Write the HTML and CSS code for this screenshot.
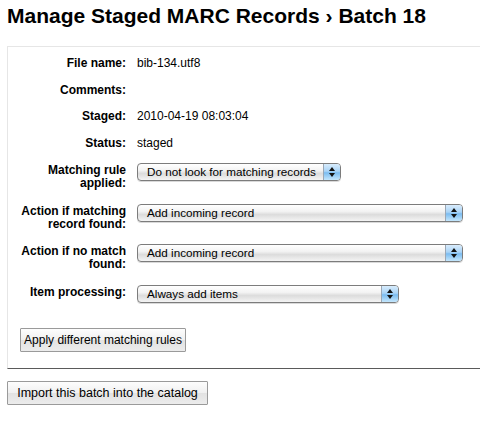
FILE: index.html
```
<!DOCTYPE html>
<html>
<head>
<meta charset="utf-8">
<link rel="stylesheet" href="styles.css">
</head>
<body>
<h1 class="title">Manage Staged MARC Records › Batch 18</h1>
<div class="box">
  <div class="rows">
    <div class="row"><div class="lbl">File name:</div><div class="val">bib-134.utf8</div></div>
    <div class="row"><div class="lbl">Comments:</div><div class="val"></div></div>
    <div class="row"><div class="lbl">Staged:</div><div class="val">2010-04-19 08:03:04</div></div>
    <div class="row"><div class="lbl">Status:</div><div class="val">staged</div></div>
    <div class="row sel-row"><div class="lbl">Matching rule applied:</div><div class="val"><div class="select w1"><span class="sel-text">Do not look for matching records</span><span class="arrows"><span class="up"></span><span class="dn"></span></span></div></div></div>
    <div class="row sel-row"><div class="lbl">Action if matching record found:</div><div class="val"><div class="select w2"><span class="sel-text">Add incoming record</span><span class="arrows"><span class="up"></span><span class="dn"></span></span></div></div></div>
    <div class="row sel-row"><div class="lbl">Action if no match found:</div><div class="val"><div class="select w2"><span class="sel-text">Add incoming record</span><span class="arrows"><span class="up"></span><span class="dn"></span></span></div></div></div>
    <div class="row sel-row"><div class="lbl">Item processing:</div><div class="val"><div class="select w3"><span class="sel-text">Always add items</span><span class="arrows"><span class="up"></span><span class="dn"></span></span></div></div></div>
  </div>
  <button class="btn btn-apply">Apply different matching rules</button>
</div>
<button class="btn btn-import">Import this batch into the catalog</button>
</body>
</html>
```
FILE: styles.css
```
html, body {
  margin: 0;
  padding: 0;
  background: #fff;
}
body {
  padding: 0 0 0 7px;
  font-family: "Liberation Sans", Arial, Helvetica, sans-serif;
  font-size: 12px;
  color: #000;
  overflow: hidden;
}
.title {
  margin: 0;
  padding-top: 4px;
  height: 46px;
  box-sizing: border-box;
  font-size: 21px;
  line-height: 24px;
  font-weight: bold;
}
.box {
  border-top: 1px solid #e6e6e6;
  border-left: 1px solid #e6e6e6;
  border-bottom: 1px solid #5a5a5a;
  padding: 10px 0 16px 12px;
  margin-right: -10px;
}
.rows {
  display: flex;
  flex-direction: column;
  gap: 13.5px;
}
.row {
  display: grid;
  grid-template-columns: 106px 1fr;
  column-gap: 11px;
  line-height: 13px;
}
.lbl {
  font-weight: bold;
  text-align: right;
}
.sel-row .lbl {
  padding-top: 1px;
}
.val {
  min-height: 13px;
}
.select {
  display: flex;
  align-items: stretch;
  height: 18px;
  box-sizing: border-box;
  border: 1px solid #7c7c7c;
  border-radius: 4px;
  background: linear-gradient(#ffffff 0%, #f3f3f3 40%, #dcdcdc 60%, #f4f4f4 100%);
  overflow: hidden;
  box-shadow: 0 1px 0 rgba(0,0,0,0.15);
}
.w1 { width: 204px; }
.w2 { width: 326px; }
.w3 { width: 262px; }
.sel-text {
  flex: 1;
  padding-left: 9px;
  font-size: 11.7px;
  line-height: 16px;
  white-space: nowrap;
}
.arrows {
  width: 16px;
  border-left: 1px solid #9aa7b5;
  background: linear-gradient(#d8ecfc 0%, #a9d3f6 45%, #7bbcf0 55%, #c4e6fc 100%);
  display: flex;
  flex-direction: column;
  align-items: center;
  justify-content: center;
  gap: 2px;
}
.up {
  width: 0; height: 0;
  border-left: 3px solid transparent;
  border-right: 3px solid transparent;
  border-bottom: 4px solid #111;
}
.dn {
  width: 0; height: 0;
  border-left: 3px solid transparent;
  border-right: 3px solid transparent;
  border-top: 4px solid #111;
}
.btn {
  font-family: "Liberation Sans", Arial, Helvetica, sans-serif;
  font-size: 12px;
  color: #000;
  height: 24px;
  padding: 0;
  white-space: nowrap;
  text-align: center;
  border: 1px solid #9a9a9a;
  border-radius: 1px;
  background: linear-gradient(#fdfdfd 0%, #f0f0f0 50%, #e2e2e2 51%, #ececec 100%);
  display: block;
}
.btn-apply {
  margin-top: 25px;
  width: 166px;
}
.btn-import {
  margin-top: 12px;
  width: 201px;
  font-size: 12.5px;
}
```
